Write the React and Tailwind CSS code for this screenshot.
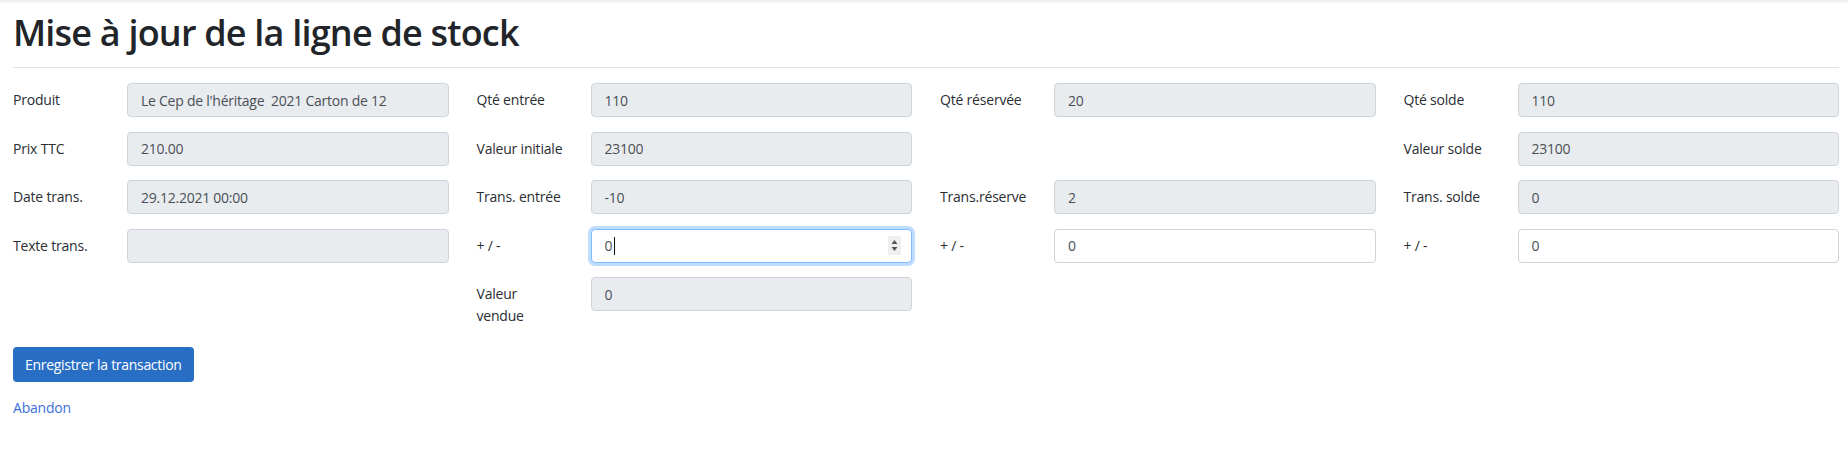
const font = { fontFamily: '"Open Sans", "Noto Sans", Arial, sans-serif' };

const rows = [
  [
    { label: "Produit", value: "Le Cep de l'héritage  2021 Carton de 12" },
    { label: "Qté entrée", value: "110" },
    { label: "Qté réservée", value: "20" },
    { label: "Qté solde", value: "110" },
  ],
  [
    { label: "Prix TTC", value: "210.00" },
    { label: "Valeur initiale", value: "23100" },
    null,
    { label: "Valeur solde", value: "23100" },
  ],
  [
    { label: "Date trans.", value: "29.12.2021 00:00" },
    { label: "Trans. entrée", value: "-10" },
    { label: "Trans.réserve", value: "2" },
    { label: "Trans. solde", value: "0" },
  ],
  [
    { label: "Texte trans.", value: "" },
    { label: "+ / -", value: "0", focused: true },
    { label: "+ / -", value: "0", editable: true },
    { label: "+ / -", value: "0", editable: true },
  ],
  [
    null,
    { label: ["Valeur", "vendue"], value: "0" },
    null,
    null,
  ],
];

function Spinner() {
  return (
    <div className="w-[13px] h-[19px] bg-[#efefef] flex items-center justify-center">
      <svg width="7" height="13" viewBox="0 0 7 13">
        <path d="M3.5 1 L6.5 5 L0.5 5 Z" fill="#555" />
        <path d="M3.5 12 L6.5 8 L0.5 8 Z" fill="#555" />
      </svg>
    </div>
  );
}

function Field({ field }) {
  if (!field) return <div />;
  const lines = Array.isArray(field.label) ? field.label : [field.label];
  return (
    <div className="grid grid-cols-[114px_1fr]">
      <div className="pt-[6px] text-[14px] leading-[22px] text-[#2a2e33] tracking-[-0.2px] whitespace-nowrap">
        {lines.map((l, i) => (
          <div key={i}>{l}</div>
        ))}
      </div>
      {field.focused ? (
        <div className="h-[34px] flex items-center pl-[13px] pr-[10px] border border-[#80bdff] rounded-[4px] bg-white shadow-[0_0_0_3px_rgba(0,123,255,0.25)] text-[14px] text-[#495057]">
          <span>{field.value}</span>
          <span className="w-px h-[18px] bg-[#111] ml-[1px]" />
          <div className="ml-auto">
            <Spinner />
          </div>
        </div>
      ) : (
        <input
          readOnly
          value={field.value}
          style={font}
          className={
            "h-[34px] w-full px-[13px] border border-[#ced4da] rounded-[4px] text-[14px] tracking-[-0.25px] text-[#495057] outline-none " +
            (field.editable ? "bg-white" : "bg-[#e9ecef]")
          }
        />
      )}
    </div>
  );
}

export default function App() {
  return (
    <div className="min-h-screen bg-white" style={font}>
      <div className="h-[4px] bg-gradient-to-b from-[#ececec] to-white" />
      <div className="pl-[13px] pr-[9px]">
        <h1 className="text-[36px] leading-[43px] font-semibold tracking-[-0.8px] text-[#212529] mt-[7px] mb-[13px]">
          Mise à jour de la ligne de stock
        </h1>
        <hr className="border-t border-[#e3e3e3] mb-[15px]" />

        <div className="grid grid-cols-4 gap-x-[28px] gap-y-[14.5px]">
          {rows.map((row, r) =>
            row.map((f, c) => <Field key={r + "-" + c} field={f} />)
          )}
        </div>

        <button className="mt-[20px] h-[35px] px-[12px] rounded-[4px] bg-[#286ec4] text-white text-[14px] tracking-[-0.3px]">
          Enregistrer la transaction
        </button>

        <div className="mt-[13px]">
          <a href="#" className="text-[14px] leading-[21px] tracking-[-0.2px] text-[#3d6fdc]">
            Abandon
          </a>
        </div>
      </div>
    </div>
  );
}
